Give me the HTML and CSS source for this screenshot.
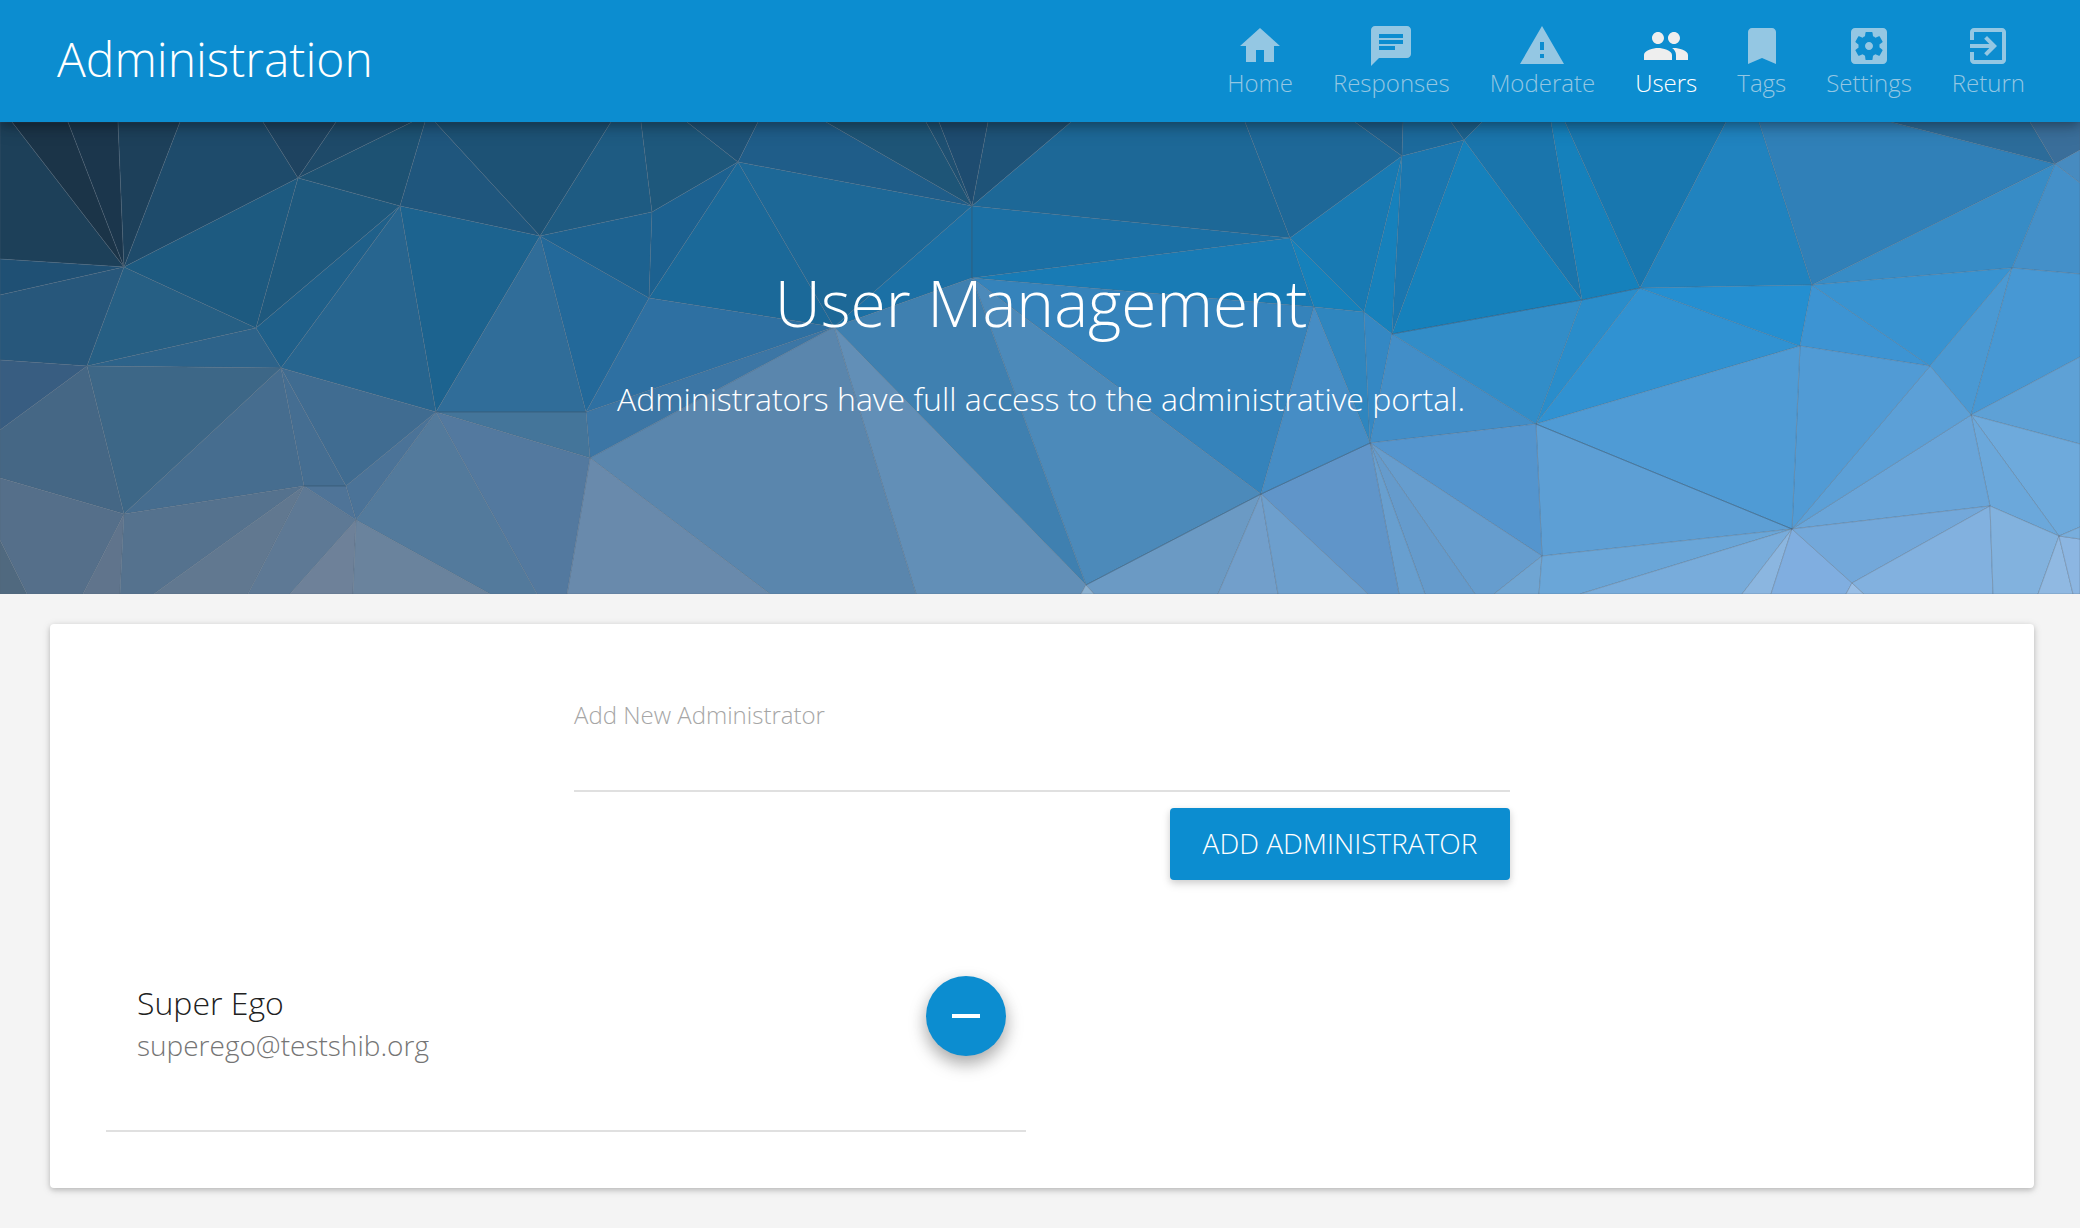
FILE: index.html
```html
<!DOCTYPE html>
<html lang="en">
<head>
<meta charset="utf-8">
<meta name="viewport" content="width=device-width, initial-scale=1">
<title>Administration - Users</title>
<link rel="stylesheet" href="styles.css">
</head>
<body>
<header class="topbar">
  <a class="brand" href="#">Administration</a>
  <nav class="nav">
    <a class="nav-link" href="#"><svg class="icon" viewBox="0 0 24 24"><path d="M10 20v-6h4v6h5v-8h3L12 3 2 12h3v8z"/></svg><span class="nav-label">Home</span></a>
    <a class="nav-link" href="#"><svg class="icon" viewBox="0 0 24 24"><path d="M20 2H4c-1.100 0-1.990.9-1.990 2L2 22l4-4h14c1.100 0 2-.9 2-2V4c0-1.100-.9-2-2-2zM6 9h12v2H6V9zm8 5H6v-2h8v2zm4-6H6V6h12v2z"/></svg><span class="nav-label">Responses</span></a>
    <a class="nav-link" href="#"><svg class="icon" viewBox="0 0 24 24"><path d="M1 21h22L12 2 1 21zm12-3h-2v-2h2v2zm0-4h-2v-4h2v4z"/></svg><span class="nav-label">Moderate</span></a>
    <a class="nav-link active" href="#" aria-current="page"><svg class="icon" viewBox="0 0 24 24"><path d="M16 11c1.660 0 2.990-1.340 2.990-3S17.660 5 16 5c-1.660 0-3 1.340-3 3s1.340 3 3 3zm-8 0c1.660 0 2.990-1.340 2.990-3S9.660 5 8 5C6.340 5 5 6.340 5 8s1.340 3 3 3zm0 2c-2.330 0-7 1.170-7 3.500V19h14v-2.500c0-2.330-4.670-3.500-7-3.500zm8 0c-.29 0-.62.02-.97.05 1.160.84 1.970 1.970 1.970 3.450V19h6v-2.500c0-2.330-4.670-3.500-7-3.500z"/></svg><span class="nav-label">Users</span></a>
    <a class="nav-link" href="#"><svg class="icon" viewBox="0 0 24 24"><path d="M17 3H7c-1.100 0-1.990.9-1.990 2L5 21l7-3 7 3V5c0-1.100-.9-2-2-2z"/></svg><span class="nav-label">Tags</span></a>
    <a class="nav-link" href="#"><svg class="icon" viewBox="0 0 24 24"><path d="M12 10c-1.100 0-2 .9-2 2s.9 2 2 2 2-.9 2-2-.9-2-2-2zm7-7H5c-1.110 0-2 .9-2 2v14c0 1.100.89 2 2 2h14c1.110 0 2-.9 2-2V5c0-1.100-.89-2-2-2zm-1.750 9c0 .23-.02.46-.05.68l1.480 1.160c.13.11.17.3.08.45l-1.400 2.420c-.09.15-.27.21-.43.15l-1.740-.7c-.36.28-.76.51-1.180.69l-.26 1.850c-.03.17-.18.3-.35.3h-2.800c-.17 0-.32-.13-.35-.29l-.26-1.850c-.43-.18-.82-.41-1.180-.69l-1.740.7c-.16.06-.34 0-.43-.15l-1.400-2.420c-.09-.15-.05-.34.08-.45l1.480-1.160c-.03-.23-.05-.46-.05-.69s.02-.46.05-.68l-1.480-1.160c-.13-.11-.17-.3-.08-.45l1.400-2.420c.09-.15.27-.21.43-.15l1.740.7c.36-.28.76-.51 1.180-.69l.26-1.850c.03-.17.18-.3.35-.3h2.800c.17 0 .32.13.35.29l.26 1.850c.43.18.82.41 1.180.69l1.740-.7c.16-.06.34 0 .43.15l1.400 2.420c.09.15.05.34-.08.45l-1.480 1.160c.03.23.05.46.05.69z"/></svg><span class="nav-label">Settings</span></a>
    <a class="nav-link" href="#"><svg class="icon" viewBox="0 0 24 24"><path d="M10.090 15.590L11.500 17l5-5-5-5-1.410 1.410L12.670 11H3v2h9.670l-2.580 2.590zM19 3H5c-1.110 0-2 .9-2 2v4h2V5h14v14H5v-4H3v4c0 1.100.89 2 2 2h14c1.100 0 2-.9 2-2V5c0-1.100-.9-2-2-2z"/></svg><span class="nav-label">Return</span></a>
  </nav>
</header>

<section class="hero">
  <svg class="hero-art" viewBox="0 122 2080 472" preserveAspectRatio="xMidYMid slice" aria-hidden="true">
    <g>
    <path fill="#1d4059" d="M0 122H12L124 267 0 259z"/>
    <path fill="#1b3448" d="M12 122H68L124 267z"/>
    <path fill="#1b364c" d="M68 122H118L124 267z"/>
    <path fill="#1d405a" d="M118 122H180L124 267z"/>
    <path fill="#1e4b6b" d="M180 122H263L298 178 124 267z"/>
    <path fill="#1e4360" d="M263 122H336L298 178z"/>
    <path fill="#1e4a69" d="M336 122H412L298 178z"/>
    <path fill="#1d5273" d="M412 122H425L400 206 298 178z"/>
    <path fill="#1f567d" d="M425 122H435L540 236 400 206z"/>
    <path fill="#1d5275" d="M435 122H611L540 236z"/>
    <path fill="#1e5b82" d="M611 122H641L652 212 540 236z"/>
    <path fill="#1e587c" d="M641 122H687L738 162 652 212z"/>
    <path fill="#1e5378" d="M687 122H758L738 162z"/>
    <path fill="#1f5d89" d="M758 122H826L972 206 738 162z"/>
    <path fill="#1e5577" d="M826 122H926L972 206z"/>
    <path fill="#1e5072" d="M926 122H939L972 206z"/>
    <path fill="#1e4c70" d="M939 122H988L972 206z"/>
    <path fill="#1e5378" d="M988 122H1071L972 206z"/>
    <path fill="#1d6897" d="M1071 122H1245L1290 238 972 206z"/>
    <path fill="#1e6898" d="M1245 122H1355L1402 156 1290 238z"/>
    <path fill="#1e608d" d="M1355 122H1403L1402 156z"/>
    <path fill="#1c6a9c" d="M1403 122H1451L1464 140 1402 156z"/>
    <path fill="#1d638f" d="M1451 122H1482L1464 140z"/>
    <path fill="#1a75ac" d="M1482 122H1551L1582 300 1464 140z"/>
    <path fill="#1581bc" d="M1551 122H1565L1640 288 1582 300z"/>
    <path fill="#1877af" d="M1565 122H1726L1640 288z"/>
    <path fill="#2083bf" d="M1726 122H1759L1812 285 1640 288z"/>
    <path fill="#3080b8" d="M1759 122H1891L2055 164 1812 285z"/>
    <path fill="#2c6c9a" d="M1891 122H2030L2055 164z"/>
    <path fill="#3a6e9a" d="M2030 122H2080V150L2055 164z"/>
    <path fill="#478bc0" d="M2055 164L2080 150V183z"/>
    <path fill="#4490c9" d="M2055 164L2080 183V274L2012 268z"/>
    <path fill="#378cc6" d="M2055 164L2012 268 1812 285z"/>
    <path fill="#1f5074" d="M124 267L0 259V295z"/>
    <path fill="#27577b" d="M124 267L0 295V360L87 366z"/>
    <path fill="#265f84" d="M124 267L87 366 256 328z"/>
    <path fill="#2d638a" d="M87 366L256 328 281 368z"/>
    <path fill="#1d5a80" d="M124 267L298 178 256 328z"/>
    <path fill="#1e597e" d="M298 178L400 206 256 328z"/>
    <path fill="#1f608a" d="M400 206L256 328 281 368z"/>
    <path fill="#27658f" d="M400 206L281 368 436 412z"/>
    <path fill="#1c638f" d="M400 206L540 236 436 412z"/>
    <path fill="#306d99" d="M540 236L436 412H586z"/>
    <path fill="#23699a" d="M540 236L586 412 649 298z"/>
    <path fill="#1d6290" d="M540 236L652 212 649 298z"/>
    <path fill="#1c6190" d="M652 212L649 298 738 162z"/>
    <path fill="#1b6999" d="M649 298L738 162 834 327z"/>
    <path fill="#1d6897" d="M738 162L972 206 834 327z"/>
    <path fill="#1b70a5" d="M972 206L834 327 972 278z"/>
    <path fill="#1b70a5" d="M972 206V278L1290 238z"/>
    <path fill="#187bb5" d="M972 278L1290 238 1314 307z"/>
    <path fill="#1581bb" d="M1290 238L1314 307 1364 312z"/>
    <path fill="#187ab3" d="M1290 238L1402 156 1364 312z"/>
    <path fill="#1681bc" d="M1402 156L1364 312 1392 334z"/>
    <path fill="#1a77b0" d="M1402 156L1392 334 1464 140z"/>
    <path fill="#1581bc" d="M1464 140L1392 334 1582 300z"/>
    <path fill="#2f86bf" d="M1314 307L1364 312 1370 443z"/>
    <path fill="#3488c4" d="M1364 312L1370 443 1392 334z"/>
    <path fill="#428ec8" d="M1392 334L1370 443 1536 424z"/>
    <path fill="#328dc8" d="M1392 334L1536 424 1582 300z"/>
    <path fill="#298dcb" d="M1582 300L1640 288 1536 424z"/>
    <path fill="#3092d2" d="M1640 288L1536 424 1800 346z"/>
    <path fill="#248fd1" d="M1640 288L1812 285 1800 346z"/>
    <path fill="#3d94d3" d="M1812 285L1800 346 1930 366z"/>
    <path fill="#3893d1" d="M1812 285L1930 366 2012 268z"/>
    <path fill="#4a99d3" d="M1930 366L2012 268 1971 415z"/>
    <path fill="#4798d4" d="M2012 268L1971 415 2080 357V274z"/>
    <path fill="#5ea1d6" d="M1971 415L2080 357V444z"/>
    <path fill="#6eaadc" d="M1971 415L2080 444V527L2059 536z"/>
    <path fill="#6ba8db" d="M1971 415L1990 506 2059 536z"/>
    <path fill="#69a5d9" d="M1971 415L1990 506 1792 529z"/>
    <path fill="#5ca0d7" d="M1971 415L1792 529 1930 366z"/>
    <path fill="#519bd5" d="M1930 366L1800 346 1792 529z"/>
    <path fill="#4f9bd5" d="M1800 346L1536 424 1792 529z"/>
    <path fill="#5d9fd5" d="M1536 424L1792 529 1542 556z"/>
    <path fill="#5495ce" d="M1536 424L1542 556 1370 443z"/>
    <path fill="#669dce" d="M1370 443L1542 556 1494 594H1475z"/>
    <path fill="#659bcc" d="M1370 443L1475 594H1425z"/>
    <path fill="#689fcf" d="M1370 443L1425 594H1399z"/>
    <path fill="#6095c9" d="M1370 443L1399 594H1368L1261 494z"/>
    <path fill="#6fa5d3" d="M1542 556L1494 594H1539z"/>
    <path fill="#6aa6d8" d="M1542 556L1539 594H1580L1792 529z"/>
    <path fill="#78acdb" d="M1792 529L1580 594H1742z"/>
    <path fill="#8bb6e0" d="M1792 529L1742 594H1771z"/>
    <path fill="#80aee0" d="M1792 529L1771 594H1846L1852 583z"/>
    <path fill="#98bee6" d="M1852 583L1846 594H1864z"/>
    <path fill="#73a8da" d="M1792 529L1852 583 1990 506z"/>
    <path fill="#82b1df" d="M1852 583L1990 506 1993 594H1864z"/>
    <path fill="#82b2de" d="M1990 506L1993 594H2038L2059 536z"/>
    <path fill="#90b9e2" d="M2059 536L2038 594H2073z"/>
    <path fill="#8cb6e2" d="M2059 536L2073 594H2080V539z"/>
    <path fill="#78aedd" d="M2059 536L2080 527V539z"/>
    <path fill="#3583bb" d="M972 278L1314 307 1261 494z"/>
    <path fill="#4c8aba" d="M972 278L1261 494 1086 585z"/>
    <path fill="#3f80b0" d="M972 278L834 327 1086 585z"/>
    <path fill="#468dc5" d="M1314 307L1370 443 1261 494z"/>
    <path fill="#628fb7" d="M834 327L1086 585 1081 594H916z"/>
    <path fill="#5a86ad" d="M834 327L916 594H770L590 458z"/>
    <path fill="#698aac" d="M590 458L770 594H567z"/>
    <path fill="#3c76a5" d="M834 327L590 458 586 412z"/>
    <path fill="#2e70a2" d="M649 298L586 412 834 327z"/>
    <path fill="#6b9ac4" d="M1261 494L1086 585 1094 594H1218z"/>
    <path fill="#729fcb" d="M1261 494L1218 594H1278z"/>
    <path fill="#6d9fcd" d="M1261 494L1278 594H1368z"/>
    <path fill="#8ab0d0" d="M1086 585L1081 594H1094z"/>
    <path fill="#44759a" d="M436 412H586L590 458z"/>
    <path fill="#53799f" d="M436 412L590 458 567 594H537z"/>
    <path fill="#537a9c" d="M436 412L537 594H490L356 520z"/>
    <path fill="#4b7398" d="M436 412L356 520 346 486z"/>
    <path fill="#406c91" d="M436 412L346 486 281 368z"/>
    <path fill="#456e92" d="M281 368L346 486H304z"/>
    <path fill="#466d8f" d="M281 368L304 486 124 514z"/>
    <path fill="#3d6787" d="M281 368L87 366 124 514z"/>
    <path fill="#456785" d="M87 366L0 430V478L124 514z"/>
    <path fill="#385d81" d="M87 366L0 360V430z"/>
    <path fill="#556f8a" d="M124 514L0 478V540L27 594H83z"/>
    <path fill="#50697f" d="M0 540L27 594H0z"/>
    <path fill="#60748c" d="M124 514L83 594H120z"/>
    <path fill="#55728e" d="M124 514L120 594H154L304 486z"/>
    <path fill="#617890" d="M304 486L154 594H248z"/>
    <path fill="#5e7995" d="M304 486L248 594H290L356 520z"/>
    <path fill="#4f7498" d="M304 486H346L356 520z"/>
    <path fill="#6e8199" d="M356 520L290 594H353z"/>
    <path fill="#6a839d" d="M356 520L353 594H490z"/>
    </g>
    <path class="crease" d="M436 412H586M304 486H346M972 206V278M1370 443L1261 494 1086 585M1792 529L1536 424M1392 334L1582 300 1640 288"/>
  </svg>
  <h1 class="hero-title">User Management</h1>
  <p class="hero-text">Administrators have full access to the administrative portal.</p>
</section>

<main class="card">
  <form class="add-form">
    <label class="field-label" for="new-admin">Add New Administrator</label>
    <input class="field" id="new-admin" type="text">
    <button class="submit" type="button">ADD ADMINISTRATOR</button>
  </form>
  <ul class="admins">
    <li class="admin">
      <div class="person">
        <span class="name">Super Ego</span>
        <span class="email">superego@testshib.org</span>
      </div>
      <button class="remove" type="button" aria-label="Remove Super Ego"><svg class="icon" viewBox="0 0 24 24"><path d="M19 13H5v-2h14v2z"/></svg></button>
    </li>
  </ul>
</main>
</body>
</html>
```
FILE: styles.css
```css
* { box-sizing: border-box; }

body {
  margin: 0;
  background: #f4f4f4;
  color: #212121;
  font-family: "Open Sans", sans-serif;
  font-weight: 300;
}

.icon {
  display: block;
  width: 48px;
  height: 48px;
  fill: currentColor;
}

.topbar {
  position: relative;
  z-index: 1;
  display: flex;
  align-items: center;
  justify-content: space-between;
  height: 122px;
  padding: 0 55px 4px 57px;
  background: #0c8dd0;
  box-shadow: 0 4px 10px rgba(0, 0, 0, .26), 0 4px 20px rgba(0, 0, 0, .16);
}

.brand {
  color: #fff;
  font-size: 48px;
  line-height: 64px;
  text-decoration: none;
}

.nav {
  display: flex;
  gap: 40px;
}

.nav-link {
  display: flex;
  flex-direction: column;
  align-items: center;
  color: #94c7e3;
  font-size: 24px;
  line-height: 26px;
  text-decoration: none;
}

.nav-link.active { color: #fff; }
.nav-link.active .icon { color: #eee; }

.hero {
  position: relative;
  padding: 133px 32px 171px 34px;
  color: #fff;
  text-align: center;
}

.hero-art {
  position: absolute;
  inset: 0;
  width: 100%;
  height: 100%;
  stroke: #54687a;
  stroke-opacity: .32;
  stroke-width: 1;
}

.crease {
  fill: none;
  stroke: #1f4f75;
  stroke-opacity: .4;
}

.hero-title,
.hero-text {
  position: relative;
  margin: 0;
  font-weight: 300;
}

.hero-title {
  font-size: 64px;
  line-height: 96px;
}

.hero-text {
  margin-top: 24px;
  font-size: 32px;
  line-height: 48px;
}

.card {
  margin: 30px 46px 40px 50px;
  padding: 72px 56px 56px;
  border-radius: 4px;
  background: #fff;
  box-shadow: 0 2px 10px rgba(0, 0, 0, .12), 0 2px 5px rgba(0, 0, 0, .16);
}

.add-form {
  display: flex;
  flex-direction: column;
  width: 50%;
  margin: 0 auto;
}

.field-label {
  color: #a6a6a6;
  font-size: 24px;
  line-height: 38px;
}

.field {
  height: 58px;
  padding: 0;
  border: 0;
  border-bottom: 2px solid #e0e0e0;
  background: none;
  font: inherit;
  font-size: 28px;
  outline: 0;
}

.submit {
  align-self: flex-end;
  min-width: 340px;
  height: 72px;
  margin-top: 16px;
  padding: 0 32px 2px;
  border: 0;
  border-radius: 4px;
  background: #0c8dd0;
  box-shadow: 0 4px 10px rgba(0, 0, 0, .14), 0 2px 6px rgba(0, 0, 0, .08);
  color: #fff;
  font: inherit;
  font-size: 28px;
}

.admins {
  display: grid;
  grid-template-columns: 1fr 1fr;
  gap: 32px;
  margin: 64px 0 0;
  padding: 0;
  list-style: none;
}

.admin {
  display: flex;
  align-items: flex-start;
  justify-content: space-between;
  padding: 32px 20px 63px 31px;
  border-bottom: 2px solid #e0e0e0;
}

.person {
  display: flex;
  flex-direction: column;
  padding-top: 7px;
}

.name {
  font-size: 32px;
  line-height: 40px;
}

.email {
  color: #757575;
  font-size: 28px;
  line-height: 44px;
}

.remove {
  display: grid;
  place-items: center;
  width: 80px;
  height: 80px;
  padding: 0;
  border: 0;
  border-radius: 50%;
  background: #0c8dd0;
  box-shadow: 0 8px 18px rgba(0, 0, 0, .26), 0 6px 16px rgba(0, 0, 0, .12);
  color: #fff;
}
```
